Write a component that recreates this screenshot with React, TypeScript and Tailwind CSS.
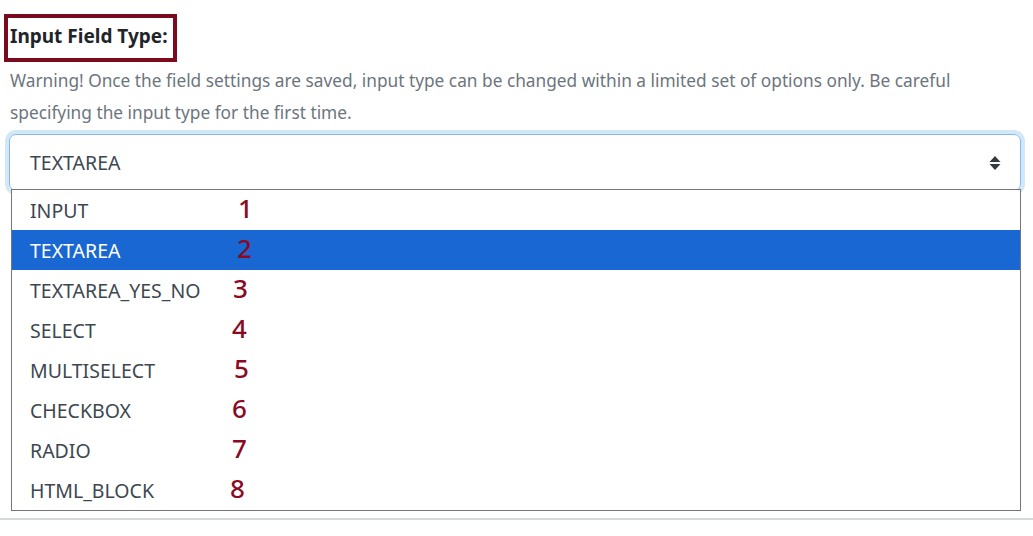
import React from "react";

const items = [
  { label: "INPUT", n: "1", dx: 1 },
  { label: "TEXTAREA", n: "2", dx: 0, active: true },
  { label: "TEXTAREA_YES_NO", n: "3", dx: -4 },
  { label: "SELECT", n: "4", dx: -5 },
  { label: "MULTISELECT", n: "5", dx: -3 },
  { label: "CHECKBOX", n: "6", dx: -5 },
  { label: "RADIO", n: "7", dx: -5 },
  { label: "HTML_BLOCK", n: "8", dx: -7 },
];

export default function App() {
  return (
    <div
      className="w-[1033px] h-[536px] bg-white overflow-hidden"
      style={{ fontFamily: '"Noto Sans", "Open Sans", sans-serif' }}
    >
      <div className="pl-[4px] pt-[14px]">
        <div className="inline-block border-[4px] border-[#7b0a1e] pl-[2px] pr-[6px] h-[48px] leading-[36px]">
          <span className="text-[19px] font-bold text-[#212529]">Input Field Type:</span>
        </div>
      </div>
      <p className="pl-[10px] pr-[40px] mt-[3px] text-[17.3px] leading-[32px] text-[#6c757d]">
        Warning! Once the field settings are saved, input type can be changed within a limited set of options only. Be careful specifying the input type for the first time.
      </p>
      <div className="ml-[9px] mr-[12px] mt-[5px] relative">
        <div className="h-[57px] rounded-[7px] border border-[#86b7fe] shadow-[0_0_0_4px_#d2e9f5] flex items-center justify-between pl-[20px] pr-[19px]">
          <span className="text-[19.5px] text-[#3d4750]">TEXTAREA</span>
          <svg width="12" height="16" viewBox="0 0 12 16">
            <path d="M6 1 L11.5 7 H0.5 Z" fill="#343a40" />
            <path d="M6 15 L11.5 9 H0.5 Z" fill="#343a40" />
          </svg>
        </div>
        <div className="absolute left-[2px] right-0 top-[55px] border border-[#767676] bg-white z-10">
          {items.map((it) => (
            <div
              key={it.label}
              className={`h-[40px] flex items-center pl-[18px] pt-[2px] text-[19.5px] ${
                it.active ? "bg-[#1967d2] text-white" : "text-[#3d4750]"
              }`}
            >
              <span className="w-[207px] shrink-0">{it.label}</span>
              <span
                className="text-[26px] font-medium leading-[30px] text-[#8a0a24] -mt-[6px]"
                style={{ marginLeft: it.dx }}
              >
                {it.n}
              </span>
            </div>
          ))}
        </div>
      </div>
      <div className="mt-[327px] h-[2px] bg-[#d5d8da]" />
    </div>
  );
}
